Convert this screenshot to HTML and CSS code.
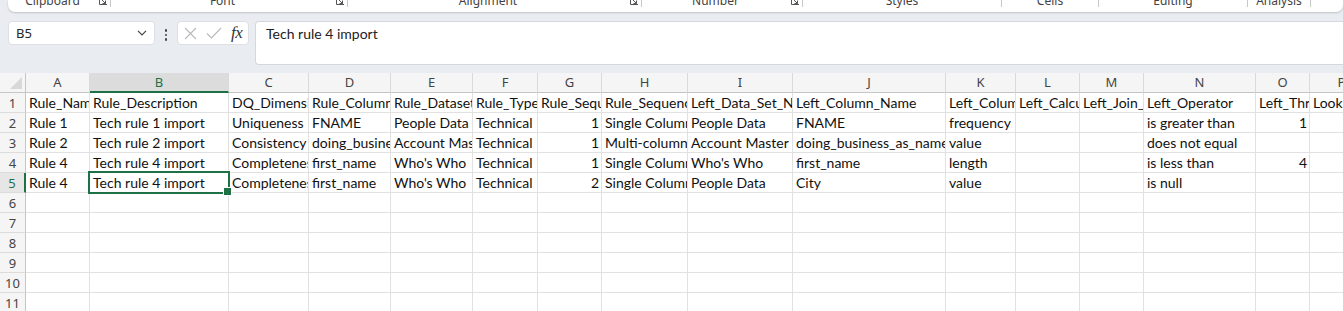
FILE: index.html
```html
<!doctype html>
<html lang="en">
<head>
    <meta charset="UTF-8">
    <title>Book1 - Excel</title>
    <link rel="stylesheet" href="styles.css">
</head>
<body>
    <!-- ribbon (bottom edge only) -->
    <div class="ribbon">
        <div class="groups">
            <div class="group g-clip"><span class="label">Clipboard</span><span class="launch"><svg width="8" height="8" viewBox="0 0 8 8"><path d="M0.5 0v7.5H8M2.5 2.5l4 4M6.5 3.5v3h-3"/></svg></span></div>
            <div class="group g-font"><span class="label">Font</span><span class="launch"><svg width="8" height="8" viewBox="0 0 8 8"><path d="M0.5 0v7.5H8M2.5 2.5l4 4M6.5 3.5v3h-3"/></svg></span></div>
            <div class="group g-align"><span class="label">Alignment</span><span class="launch"><svg width="8" height="8" viewBox="0 0 8 8"><path d="M0.5 0v7.5H8M2.5 2.5l4 4M6.5 3.5v3h-3"/></svg></span></div>
            <div class="group g-num"><span class="label">Number</span><span class="launch"><svg width="8" height="8" viewBox="0 0 8 8"><path d="M0.5 0v7.5H8M2.5 2.5l4 4M6.5 3.5v3h-3"/></svg></span></div>
            <div class="group g-styles"><span class="label">Styles</span></div>
            <div class="group g-cells"><span class="label">Cells</span></div>
            <div class="group g-edit"><span class="label">Editing</span></div>
            <div class="group g-anal"><span class="label">Analysis</span></div>
        </div>
    </div>

    <!-- formula bar -->
    <div class="fbar">
        <div class="namebox">
            <span>B5</span>
            <svg width="10" height="6" viewBox="0 0 10 6"><path d="M1 0.8l4 4 4-4"/></svg>
        </div>
        <div class="more">
            <i></i><i></i><i></i>
        </div>
        <div class="fbtns">
            <svg class="ico-x" width="13" height="13" viewBox="0 0 13 13"><path d="M1 1l11 11M12 1L1 12"/></svg>
            <svg class="ico-ok" width="16" height="12" viewBox="0 0 16 12"><path d="M1 6.5l4.5 4.5L15 1"/></svg>
            <span class="fx">fx</span>
        </div>
        <div class="finput">Tech rule 4 import</div>
    </div>

    <!-- sheet -->
    <div class="sheet">
        <div class="row colhead">
            <div class="corner"></div>
            <div>A</div><div class="sel">B</div><div>C</div><div>D</div><div>E</div><div>F</div><div>G</div><div>H</div>
            <div>I</div><div>J</div><div>K</div><div>L</div><div>M</div><div>N</div><div>O</div><div>P</div>
        </div>
        <div class="row">
            <div class="rh">1</div>
            <div>Rule_Name</div><div>Rule_Description</div><div>DQ_Dimension</div><div>Rule_Column_Name</div>
            <div>Rule_Dataset_Name</div><div>Rule_Type</div><div>Rule_Sequence</div><div>Rule_Sequence_Type</div>
            <div>Left_Data_Set_Name</div><div>Left_Column_Name</div><div>Left_Column_Function</div><div>Left_Calculation</div>
            <div>Left_Join_Column</div><div>Left_Operator</div><div>Left_Threshold</div><div>Lookup_Table</div>
        </div>
        <div class="row">
            <div class="rh">2</div>
            <div>Rule 1</div><div>Tech rule 1 import</div><div>Uniqueness</div><div>FNAME</div>
            <div>People Data</div><div>Technical</div><div class="num">1</div><div>Single Column</div>
            <div>People Data</div><div>FNAME</div><div>frequency</div><div></div>
            <div></div><div>is greater than</div><div class="num">1</div><div></div>
        </div>
        <div class="row">
            <div class="rh">3</div>
            <div>Rule 2</div><div>Tech rule 2 import</div><div>Consistency</div><div>doing_business_as_name</div>
            <div>Account Master</div><div>Technical</div><div class="num">1</div><div>Multi-column</div>
            <div>Account Master</div><div>doing_business_as_name</div><div>value</div><div></div>
            <div></div><div>does not equal</div><div></div><div></div>
        </div>
        <div class="row">
            <div class="rh">4</div>
            <div>Rule 4</div><div>Tech rule 4 import</div><div>Completeness</div><div>first_name</div>
            <div>Who's Who</div><div>Technical</div><div class="num">1</div><div>Single Column</div>
            <div>Who's Who</div><div>first_name</div><div>length</div><div></div>
            <div></div><div>is less than</div><div class="num">4</div><div></div>
        </div>
        <div class="row">
            <div class="rh sel">5</div>
            <div>Rule 4</div><div class="active">Tech rule 4 import</div><div>Completeness</div><div>first_name</div>
            <div>Who's Who</div><div>Technical</div><div class="num">2</div><div>Single Column</div>
            <div>People Data</div><div>City</div><div>value</div><div></div>
            <div></div><div>is null</div><div></div><div></div>
        </div>
        <div class="row">
            <div class="rh">6</div>
            <div></div><div></div><div></div><div></div><div></div><div></div><div></div><div></div>
            <div></div><div></div><div></div><div></div><div></div><div></div><div></div><div></div>
        </div>
        <div class="row">
            <div class="rh">7</div>
            <div></div><div></div><div></div><div></div><div></div><div></div><div></div><div></div>
            <div></div><div></div><div></div><div></div><div></div><div></div><div></div><div></div>
        </div>
        <div class="row">
            <div class="rh">8</div>
            <div></div><div></div><div></div><div></div><div></div><div></div><div></div><div></div>
            <div></div><div></div><div></div><div></div><div></div><div></div><div></div><div></div>
        </div>
        <div class="row">
            <div class="rh">9</div>
            <div></div><div></div><div></div><div></div><div></div><div></div><div></div><div></div>
            <div></div><div></div><div></div><div></div><div></div><div></div><div></div><div></div>
        </div>
        <div class="row">
            <div class="rh">10</div>
            <div></div><div></div><div></div><div></div><div></div><div></div><div></div><div></div>
            <div></div><div></div><div></div><div></div><div></div><div></div><div></div><div></div>
        </div>
        <div class="row">
            <div class="rh">11</div>
            <div></div><div></div><div></div><div></div><div></div><div></div><div></div><div></div>
            <div></div><div></div><div></div><div></div><div></div><div></div><div></div><div></div>
        </div>
    </div>
</body>
</html>
```

FILE: styles.css
```css
* {
    margin: 0;
    padding: 0;
    box-sizing: border-box;
}
html, body {
    width: 1343px;
    height: 311px;
    overflow: hidden;
}
body {
    background: #e9ecf0;
    font-family: "Noto Sans", "Open Sans", sans-serif;
    color: #262626;
}

/*ribbon start*/
.ribbon {
    height: 12px;
    margin-left: 8px;
    background: #fff;
    border-radius: 0 0 7px 7px;
    box-shadow: 0 1px 2px rgba(0, 0, 0, .18);
    overflow: hidden;
}
.ribbon .groups {
    display: flex;
    margin-top: -5px;
    height: 16px;
    font-size: 12px;
    line-height: 16px;
    color: #424242;
}
.ribbon .group {
    display: flex;
    align-items: center;
    border-right: 1px solid #c8c8c8;
    height: 12px;
}
.ribbon .label {
    flex: 1;
    text-align: center;
}
.ribbon .launch {
    display: flex;
    width: 8px;
    margin: 0 3px 0 2px;
}
.ribbon .launch svg {
    fill: none;
    stroke: #555;
    stroke-width: 1;
}
.ribbon .g-clip { width: 103px; }
.ribbon .g-font { width: 237px; }
.ribbon .g-align { width: 294px; }
.ribbon .g-num { width: 161px; }
.ribbon .g-styles { width: 199px; }
.ribbon .g-cells { width: 97px; }
.ribbon .g-edit { width: 149px; }
.ribbon .g-anal { width: 63px; }
/*ribbon end*/

/*formula bar start*/
.fbar {
    display: flex;
    align-items: flex-start;
    height: 61px;
    padding: 9px 0 0 8px;
}
.fbar .namebox {
    display: flex;
    align-items: center;
    justify-content: space-between;
    width: 147px;
    height: 24px;
    padding: 0 7px 0 7px;
    background: #fff;
    border: 1px solid #dcdfe3;
    border-radius: 4px;
    font-size: 13px;
}
.fbar .namebox svg {
    fill: none;
    stroke: #444;
    stroke-width: 1.2;
}
.fbar .more {
    display: flex;
    flex-direction: column;
    align-items: center;
    gap: 2px;
    width: 22px;
    padding-top: 8px;
}
.fbar .more i {
    display: block;
    width: 2.5px;
    height: 2.5px;
    border-radius: 50%;
    background: #444;
}
.fbar .fbtns {
    display: flex;
    align-items: center;
    width: 72px;
    height: 24px;
    padding-left: 6px;
    background: #fff;
    border: 1px solid #dcdfe3;
    border-radius: 4px;
}
.fbar .fbtns svg {
    fill: none;
    stroke: #b9b9b9;
    stroke-width: 1.1;
}
.fbar .ico-ok {
    margin-left: 9px;
}
.fbar .fx {
    margin-left: 9px;
    font-family: "Liberation Serif", serif;
    font-style: italic;
    font-size: 17px;
    color: #333;
    letter-spacing: -0.5px;
}
.fbar .finput {
    flex: 1;
    height: 44px;
    margin-left: 6px;
    padding: 3px 0 0 10px;
    background: #fff;
    border: 1px solid #d4d7db;
    border-right: 0;
    border-radius: 4px 0 0 4px;
    font-family: "Lato", sans-serif;
    font-size: 14px;
    color: #222;
}
/*formula bar end*/

/*sheet start*/
.sheet {
    background: #fff;
}
.sheet .row {
    display: grid;
    grid-template-columns: 26px 64px 139px 80px 82px 82px 65px 64px 86px 105px 153px 70px 64px 64px 112px 54px 64px;
    height: 20px;
}
.sheet .row > div {
    height: 20px;
    padding: 1px 2px 0 3px;
    border-right: 1px solid #e1e1e1;
    border-bottom: 1px solid #e1e1e1;
    overflow: hidden;
    white-space: nowrap;
    font-family: "Lato", sans-serif;
    font-size: 14px;
    line-height: 18px;
    color: #111;
}
.sheet .row > .num {
    text-align: right;
}
.sheet .row > .rh {
    padding: 1px 0 0;
    background: #f5f5f5;
    border-right-color: #c6c6c6;
    border-bottom-color: #dcdcdc;
    text-align: center;
    font-family: "Noto Sans", sans-serif;
    font-size: 13px;
    color: #444;
}
.sheet .row > .rh.sel {
    background: #e6e6e6;
    border-right: 2px solid #1e7145;
    color: #1e7145;
}
.sheet .colhead > div {
    padding: 0;
    background: #f5f5f5;
    border-right-color: #dadada;
    border-bottom-color: #c6c6c6;
    text-align: center;
    font-family: "Noto Sans", sans-serif;
    font-size: 13px;
    color: #444;
}
.sheet .colhead > .sel {
    background: #dcdcdc;
    border-bottom: 2px solid #1e7145;
    color: #1e7145;
}
.sheet .colhead > .corner {
    position: relative;
    border-right-color: #c6c6c6;
}
.sheet .colhead > .corner::after {
    content: "";
    position: absolute;
    right: 3px;
    bottom: 3px;
    border-style: solid;
    border-width: 0 0 12px 12px;
    border-color: transparent transparent #d8d8d8 transparent;
}
.sheet .row > .active {
    position: relative;
    overflow: visible;
}
.sheet .row > .active::before {
    content: "";
    position: absolute;
    top: -2px;
    left: -2px;
    right: -2px;
    bottom: -2px;
    border: 2px solid #1e7145;
}
.sheet .row > .active::after {
    content: "";
    position: absolute;
    right: -4px;
    bottom: -4px;
    width: 7px;
    height: 7px;
    background: #1e7145;
    border: 1px solid #fff;
}
/*sheet end*/
```
